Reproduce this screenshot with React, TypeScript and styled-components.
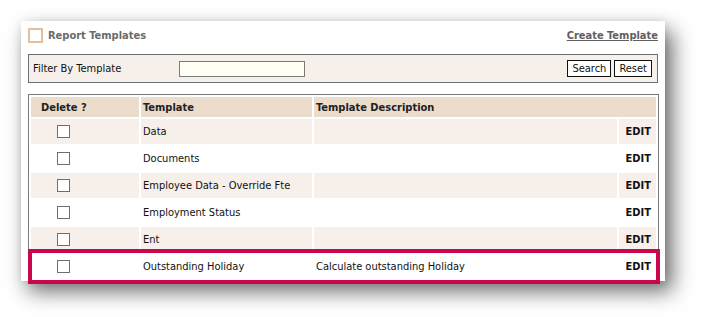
import styled, { createGlobalStyle } from 'styled-components';

interface ITemplate {
  name: string;
  description: string;
}

const templates: ITemplate[] = [
  { name: 'Data', description: '' },
  { name: 'Documents', description: '' },
  { name: 'Employee Data - Override Fte', description: '' },
  { name: 'Employment Status', description: '' },
  { name: 'Ent', description: '' },
  { name: 'Outstanding Holiday', description: 'Calculate outstanding Holiday' },
];

const GlobalStyle = createGlobalStyle`
  html, body {
    margin: 0;
    background: #ffffff;
  }
  body {
    font-family: 'DejaVu Sans Condensed', 'DejaVu Sans', 'Liberation Sans', sans-serif;
    font-size: 11px;
    color: #111;
  }
`;

const App = () => {
  return (
    <>
      <GlobalStyle />
      <Page>
        <Card>
          <Header>
            <Title>
              <TitleBox />
              Report Templates
            </Title>
            <CreateLink href="#">Create Template</CreateLink>
          </Header>
          <FilterBar>
            <FilterLabel>Filter By Template</FilterLabel>
            <FilterInput type="text" />
            <Buttons>
              <SmallButton>Search</SmallButton>
              <SmallButton>Reset</SmallButton>
            </Buttons>
          </FilterBar>
          <Table>
            <colgroup>
              <col style={{ width: 108 }} />
              <col style={{ width: 171 }} />
              <col style={{ width: 303 }} />
              <col style={{ width: 37 }} />
            </colgroup>
            <thead>
              <tr>
                <Th $first>Delete ?</Th>
                <Th>Template</Th>
                <Th colSpan={2}>Template Description</Th>
              </tr>
            </thead>
            <tbody>
              {templates.map((t, i) => (
                <Row key={t.name} $odd={i % 2 === 0}>
                  <CheckCell>
                    <Check />
                  </CheckCell>
                  <TextCell>{t.name}</TextCell>
                  <TextCell>{t.description}</TextCell>
                  <EditCell>EDIT</EditCell>
                </Row>
              ))}
            </tbody>
          </Table>
          <Highlight />
        </Card>
      </Page>
    </>
  );
};

const Page = styled.div`
  box-sizing: border-box;
  width: 707px;
  height: 317px;
  padding: 21px 0 0 21px;
  overflow: hidden;
`;

const Card = styled.div`
  position: relative;
  width: 644px;
  height: 260px;
  box-sizing: border-box;
  padding: 7px 0 0 7px;
  background: #ffffff;
  box-shadow: 7px 10px 20px rgba(0, 0, 0, 0.6), 0 0 8px rgba(0, 0, 0, 0.08);
`;

const Header = styled.div`
  width: 631px;
  height: 15px;
  display: flex;
  align-items: center;
  justify-content: space-between;
`;

const Title = styled.div`
  display: flex;
  align-items: center;
  gap: 5px;
  font-weight: bold;
  font-size: 11px;
  color: #6b6b6b;
`;

const TitleBox = styled.span`
  width: 15px;
  height: 15px;
  box-sizing: border-box;
  border: 2px solid #dfc1a1;
`;

const CreateLink = styled.a`
  font-weight: bold;
  font-size: 11px;
  color: #606060;
  text-decoration: underline;
  margin-right: 1px;
`;

const FilterBar = styled.div`
  margin-top: 11px;
  width: 630px;
  height: 29px;
  box-sizing: border-box;
  border: 1px solid #6e6e6e;
  background: #f7efe9;
  display: flex;
  align-items: center;
  padding: 0 5px 0 4px;
`;

const FilterLabel = styled.span`
  width: 146px;
  color: #111;
`;

const FilterInput = styled.input`
  width: 126px;
  height: 16px;
  box-sizing: border-box;
  border: 1px solid #7a7a7a;
  background: #fffff4;
  padding: 0 2px;
  outline: none;
`;

const Buttons = styled.div`
  margin-left: auto;
  display: flex;
  gap: 3px;
`;

const SmallButton = styled.button`
  height: 17px;
  box-sizing: border-box;
  border: 1px solid #111;
  background: #ffffff;
  padding: 0 4px;
  font-family: inherit;
  font-size: 11px;
  color: #111;
  line-height: 14px;
`;

const Table = styled.table`
  margin-top: 11px;
  width: 631px;
  border: 1px solid #7a7a7a;
  border-spacing: 2px;
  table-layout: fixed;
  font-size: 11px;
`;

const Th = styled.th<{ $first?: boolean }>`
  height: 20px;
  padding: 0 0 0 ${(p) => (p.$first ? '10px' : '2px')};
  background: #ecdccb;
  text-align: left;
  font-weight: bold;
  color: #222;
`;

const Row = styled.tr<{ $odd: boolean }>`
  height: 25px;
  td {
    background: ${(p) => (p.$odd ? '#f7efe9' : '#ffffff')};
  }
`;

const CheckCell = styled.td`
  padding: 0 0 0 26px;
  vertical-align: middle;
  line-height: 0;
`;

const Check = styled.span`
  display: inline-block;
  width: 13px;
  height: 13px;
  box-sizing: border-box;
  border: 1px solid #6f6f6f;
  background: #fff;
`;

const TextCell = styled.td`
  padding: 0 0 0 2px;
  color: #111;
  white-space: nowrap;
`;

const EditCell = styled.td`
  padding: 0 5px 0 0;
  text-align: right;
  font-weight: bold;
  color: #111;
`;

const Highlight = styled.div`
  position: absolute;
  left: 7px;
  top: 228px;
  width: 632px;
  height: 35px;
  box-sizing: border-box;
  border: 4px solid #c8074f;
  pointer-events: none;
`;

export default App;
